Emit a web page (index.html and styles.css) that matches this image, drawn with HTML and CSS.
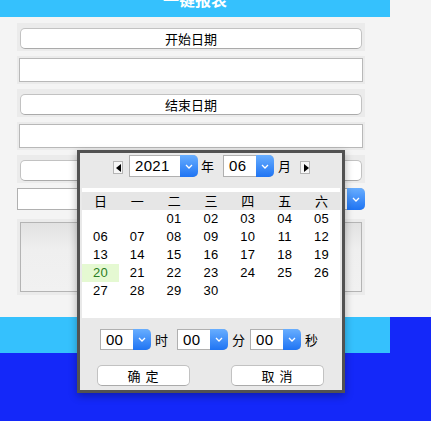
FILE: index.html
```html
<!DOCTYPE html>
<html lang="zh">
<head>
<meta charset="utf-8">
<title>一键报表</title>
<link rel="stylesheet" href="styles.css">
</head>
<body>
<div class="top">
  <div class="col">
    <header class="hd"><span class="hd-title">一键报表</span></header>
    <div class="rows">
      <div class="row row-btn"><button class="btn">开始日期</button></div>
      <div class="row row-inp"><div class="inp"></div></div>
      <div class="row row-btn"><button class="btn">结束日期</button></div>
      <div class="row row-inp"><div class="inp"></div></div>
      <div class="row row-btn"><button class="btn"></button></div>
      <div class="sel sel-wide"><span class="sel-val"></span><span class="sel-arrow"><svg width="8" height="5" viewBox="0 0 8 5"><polyline points="1,1 4,4 7,1" fill="none" stroke="#fff" stroke-width="1.3"/></svg></span></div>
      <div class="row row-area"><div class="area"></div></div>
    </div>
  </div>
</div>
<footer class="ft"></footer>

<div class="pop">
  <div class="nav">
    <span class="arr arr-l"></span>
    <div class="sel sel-year"><span class="sel-val">2021</span><span class="sel-arrow"><svg width="8" height="5" viewBox="0 0 8 5"><polyline points="1,1 4,4 7,1" fill="none" stroke="#fff" stroke-width="1.3"/></svg></span></div>
    <span class="lbl lbl-y">年</span>
    <div class="sel sel-mon"><span class="sel-val">06</span><span class="sel-arrow"><svg width="8" height="5" viewBox="0 0 8 5"><polyline points="1,1 4,4 7,1" fill="none" stroke="#fff" stroke-width="1.3"/></svg></span></div>
    <span class="lbl lbl-m">月</span>
    <span class="arr arr-r"></span>
  </div>
  <div class="cal">
    <div class="wk"><span>日</span><span>一</span><span>二</span><span>三</span><span>四</span><span>五</span><span>六</span></div>
    <div class="days">
      <span></span><span></span><span>01</span><span>02</span><span>03</span><span>04</span><span>05</span>
      <span>06</span><span>07</span><span>08</span><span>09</span><span>10</span><span>11</span><span>12</span>
      <span>13</span><span>14</span><span>15</span><span>16</span><span>17</span><span>18</span><span>19</span>
      <span class="today">20</span><span>21</span><span>22</span><span>23</span><span>24</span><span>25</span><span>26</span>
      <span>27</span><span>28</span><span>29</span><span>30</span><span></span><span></span><span></span>
      <span></span><span></span><span></span><span></span><span></span><span></span><span></span>
    </div>
  </div>
  <div class="time">
    <div class="sel sel-t"><span class="sel-val">00</span><span class="sel-arrow"><svg width="8" height="5" viewBox="0 0 8 5"><polyline points="1,1 4,4 7,1" fill="none" stroke="#fff" stroke-width="1.3"/></svg></span></div>
    <span class="lbl lbl-h">时</span>
    <div class="sel sel-t"><span class="sel-val">00</span><span class="sel-arrow"><svg width="8" height="5" viewBox="0 0 8 5"><polyline points="1,1 4,4 7,1" fill="none" stroke="#fff" stroke-width="1.3"/></svg></span></div>
    <span class="lbl lbl-mi">分</span>
    <div class="sel sel-t"><span class="sel-val">00</span><span class="sel-arrow"><svg width="8" height="5" viewBox="0 0 8 5"><polyline points="1,1 4,4 7,1" fill="none" stroke="#fff" stroke-width="1.3"/></svg></span></div>
    <span class="lbl lbl-s">秒</span>
  </div>
  <div class="acts">
    <button class="btn btn-act">确 定</button>
    <button class="btn btn-act">取 消</button>
  </div>
</div>
</body>
</html>
```

FILE: styles.css
```css
* { box-sizing: border-box; }
html, body {
  margin: 0;
  padding: 0;
}
body {
  background: #1428f9;
  font-family: "Liberation Sans", "Noto Sans CJK SC", sans-serif;
  font-size: 13px;
  color: #000;
  width: 431px;
  height: 421px;
  overflow: hidden;
  position: relative;
}
.top {
  background: #f4f4f4;
  height: 317px;
}
.col {
  width: 390px;
}
.hd {
  height: 17px;
  background: #35c1fd;
  overflow: hidden;
  text-align: center;
}
.hd-title {
  display: block;
  margin-top: -11px;
  line-height: 20px;
  color: #fff;
  font-weight: bold;
  font-size: 16px;
  font-family: "Noto Sans CJK SC", sans-serif;
}
.rows {
  padding: 6px 25px 0 17px;
  display: flex;
  flex-direction: column;
}
.row {
  background: #ebebeb;
  height: 28px;
  margin-bottom: 5px;
  display: flex;
}
.row-btn { padding: 5px 3px 2px; }
.row-inp { padding: 2px; }
.btn {
  flex: 1;
  height: 21px;
  margin: 0;
  padding: 0;
  background: #fff;
  border: 1px solid #c2c2c2;
  border-bottom-color: #aaa;
  border-radius: 5px;
  font-family: "Noto Sans CJK SC", sans-serif;
  font-size: 13px;
  color: #000;
  line-height: 19px;
}
.inp {
  flex: 1;
  background: #fff;
  border: 1px solid #b8b8b8;
}
.row-area {
  height: 76px;
  padding: 3px;
}
.area {
  flex: 1;
  border: 1px solid #b4b4b4;
  background: linear-gradient(#e2e2e2, #efefef 40%, #f1f1f1);
}

/* select */
.sel {
  display: flex;
  height: 22px;
  background: #fff;
  border: 1px solid #b0b0b0;
  border-right: none;
  border-radius: 0 5px 5px 0;
}
.sel-val {
  flex: 1;
  padding-left: 5px;
  line-height: 20px;
  font-size: 15px;
  font-family: "Liberation Sans", sans-serif;
  letter-spacing: 0.3px;
  overflow: hidden;
  white-space: nowrap;
}
.sel-arrow {
  flex: none;
  width: 18px;
  margin-top: -1px;
  margin-bottom: -1px;
  background: linear-gradient(#68aeff, #1f74f3);
  border-radius: 0 5px 5px 0;
  display: flex;
  align-items: center;
  justify-content: center;
}
.sel-wide {
  width: 348px;
  margin-bottom: 9px;
}

.ft {
  width: 390px;
  height: 36px;
  background: #35c1fd;
}

/* popup */
.pop {
  position: absolute;
  left: 77px;
  top: 150px;
  width: 268px;
  height: 243px;
  background: #e9e9e9;
  border: 3px solid #525252;
  box-shadow: 0 3px 8px rgba(0,0,0,0.3);
  display: flex;
  flex-direction: column;
}
.nav {
  display: flex;
  align-items: center;
  justify-content: center;
  height: 22px;
  margin-top: 2px;
  margin-bottom: 11px;
  padding-left: 1px;
}
.arr {
  flex: none;
  width: 10px;
  height: 13px;
  background: #f7f7f7;
  border: 1px solid #b5b5b5;
  position: relative;
  margin-top: 2px;
}
.arr::after {
  content: "";
  position: absolute;
  top: 2px;
  border-top: 4px solid transparent;
  border-bottom: 4px solid transparent;
}
.arr-l::after { left: 2px; border-right: 5px solid #000; }
.arr-r::after { left: 3px; border-left: 5px solid #000; }
.sel-year { flex: none; width: 69px; margin-left: 6px; }
.sel-mon { flex: none; width: 51px; }
.lbl {
  flex: none;
  font-family: "Noto Sans CJK SC", sans-serif;
  font-size: 13px;
  line-height: 20px;
}
.lbl-y { margin: 0 9px 0 3px; }
.lbl-m { margin: 0 9px 0 4px; }

.cal {
  margin: 0 2px;
  background: #fff;
  padding-top: 4px;
  height: 130px;
}
.wk {
  display: grid;
  grid-template-columns: repeat(7, 1fr);
  background: #e6e6e6;
  height: 18px;
  font-family: "Noto Sans CJK SC", sans-serif;
  font-size: 13px;
  line-height: 18px;
  text-align: center;
}
.days {
  display: grid;
  grid-template-columns: repeat(7, 1fr);
  grid-auto-rows: 18px;
  text-align: center;
  line-height: 18px;
  font-size: 13px;
  letter-spacing: 0.3px;
}
.today {
  background: #e5f9d2;
  color: #2a7d22;
}

.time {
  display: flex;
  align-items: center;
  justify-content: center;
  margin-top: 11px;
  height: 21px;
  padding-right: 4px;
}
.sel-t { flex: none; width: 51px; height: 21px; }
.sel-t .sel-val { line-height: 19px; }
.lbl-h { margin: 0 9px 0 4px; }
.lbl-mi { margin: 0 5px 0 4px; }
.lbl-s { margin-left: 4px; }

.acts {
  display: flex;
  justify-content: center;
  gap: 41px;
  margin-top: 15px;
  padding-right: 1px;
}
.btn-act {
  flex: none;
  width: 93px;
  letter-spacing: 1px;
}
```
